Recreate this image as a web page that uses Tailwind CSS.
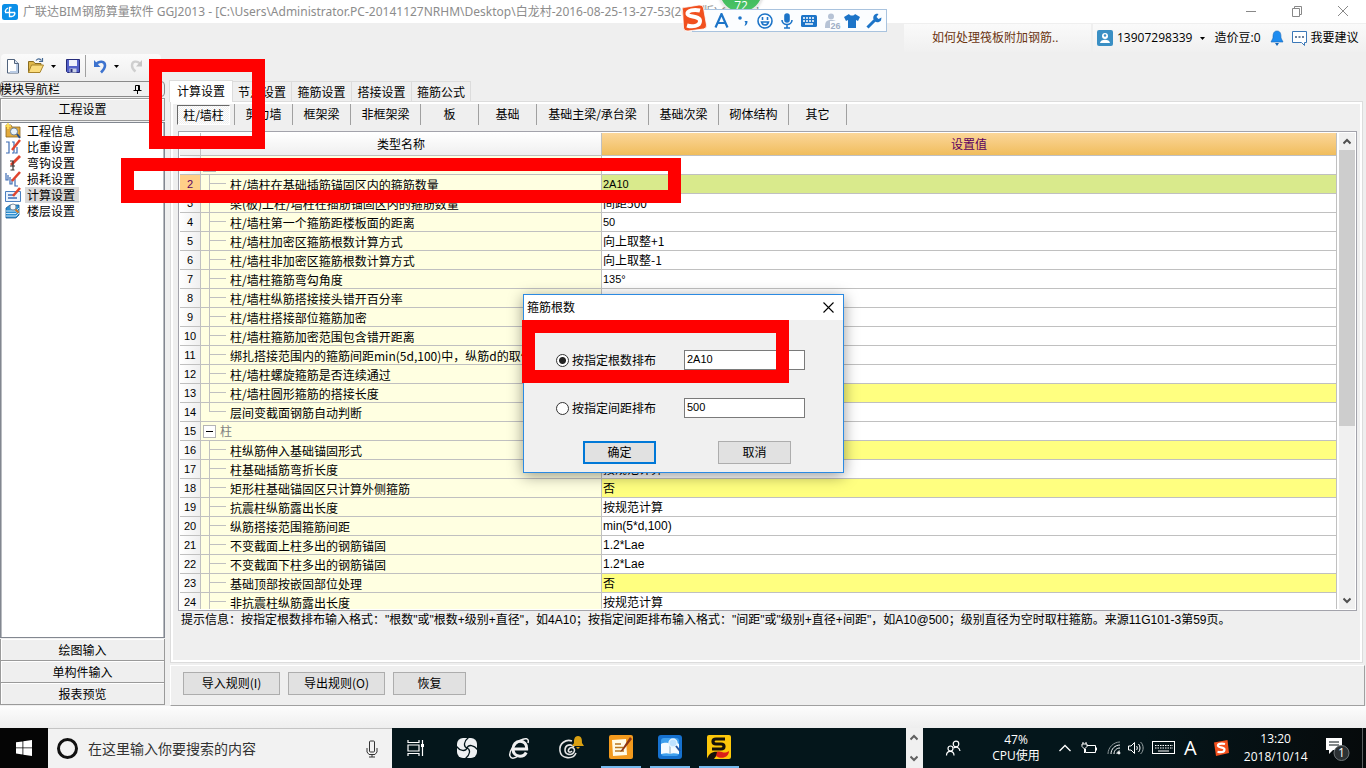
<!DOCTYPE html>
<html lang="zh-CN">
<head>
<meta charset="utf-8">
<title>广联达BIM钢筋算量软件 GGJ2013</title>
<script src="https://cdn.jsdelivr.net/npm/@tailwindcss/browser@4"></script>
</head>
<body class="relative flex h-screen flex-col overflow-hidden bg-[#efefef] font-['Noto_Sans_CJK_SC','Liberation_Sans',sans-serif] text-xs text-black">

<!-- Title bar -->
<header class="flex h-[23px] shrink-0 items-center bg-white pl-0.5">
  <svg class="size-4 shrink-0" viewBox="0 0 16 16"><rect width="16" height="16" rx="2.5" fill="#0b8fe8"/><path d="M3 8.500h10M9.500 3.500H7.500v9H10M13 8.500a4.200 4.200 0 0 1-3 4M3.200 8A4.600 4.600 0 0 1 6 4" fill="none" stroke="#fff" stroke-width="1.300"/></svg>
  <h1 class="ml-[5px] grow overflow-hidden font-['Noto_Sans','Noto_Sans_CJK_SC',sans-serif] whitespace-nowrap text-[#8c8c8c]">广联达BIM钢筋算量软件 GGJ2013 - [C:\Users\Administrator.PC-20141127NRHM\Desktop\白龙村-2016-08-25-13-27-53(2016版).GGJ12]</h1>
  <div class="flex shrink-0 items-center pb-0.5">
    <button aria-label="最小化" class="flex w-[46px] justify-center"><svg class="size-3" viewBox="0 0 12 12"><path d="M1 6.500h10" stroke="#888"/></svg></button>
    <button aria-label="还原" class="flex w-[46px] justify-center"><svg class="size-3" viewBox="0 0 12 12" fill="none" stroke="#888"><path d="M1.500 3.500h7v8h-7zM3.500 3.500v-2h7v8h-2"/></svg></button>
    <button aria-label="关闭" class="flex w-[46px] justify-center"><svg class="size-3" viewBox="0 0 12 12" stroke="#888"><path d="M1 1l10 10M11 1L1 11"/></svg></button>
  </div>
</header>

<!-- Tool strip -->
<div class="flex h-[57px] shrink-0 items-start justify-between">
  <div class="mt-[31px] ml-px flex h-6 w-40 items-center rounded-sm bg-gradient-to-b from-[#fbfbfb] to-[#f0f0f0]">
    <button aria-label="新建" class="ml-1"><svg class="size-4" viewBox="0 0 16 16"><path d="M2.500 1.500h7l4 4v9.500h-11z" fill="#fff" stroke="#51637c"/><path d="M12 6v8H5" fill="none" stroke="#b9cbe4" stroke-width="2"/><path d="M9.500 1.500v4h4" fill="#d6e2f2" stroke="#51637c"/></svg></button>
    <button aria-label="打开" class="ml-1.5"><svg class="size-[18px]" viewBox="0 0 18 18"><path d="M1.500 15.500v-11h5l1.500 2h6v3" fill="#e0b84a" stroke="#8a6d20"/><path d="M1.500 15.500l3-7.500h12l-3.500 7.500z" fill="#fbdc7c" stroke="#a8842b"/><path d="M9 3.500c2-2.500 4-2 5.500 0M15.500 1v3.500H12" fill="none" stroke="#476a94" stroke-width="1.200"/></svg></button>
    <svg class="ml-[5px] size-[7px]" viewBox="0 0 7 7"><path d="M1 2h5L3.500 5z"/></svg>
    <button aria-label="保存" class="ml-2"><svg class="size-4" viewBox="0 0 16 16"><path d="M1.500 1.500h13v13h-12l-1-1z" fill="#5361c9" stroke="#252b7a"/><path d="M4 2h8v6H4z" fill="#eef1fb"/><path d="M4.500 10.500h7v4h-7z" fill="#c9d0e4"/><path d="M5.500 11h2v3h-2z" fill="#252b7a"/></svg></button>
    <span class="ml-1 h-[22px] w-px bg-[#a0a0a0]"></span>
    <button aria-label="撤销" class="ml-[7px]"><svg class="size-4" viewBox="0 0 16 16"><path d="M3 6.500C6 2.500 12 2.800 12 7.500c0 3-2 5-4 7" fill="none" stroke="#3d73cf" stroke-width="2.600"/><path d="M1 2v7h6.500z" fill="#3d73cf"/></svg></button>
    <svg class="ml-1 size-[7px]" viewBox="0 0 7 7"><path d="M1 2h5L3.500 5z"/></svg>
    <button aria-label="重做" class="ml-2"><svg class="size-4" viewBox="0 0 16 16"><path d="M12 5.500C9 2.500 4 3 4 7.500c0 2.500 1.500 4.500 3.500 6" fill="none" stroke="#cfcfcf" stroke-width="2.400"/><path d="M14 2v6.500H8z" fill="#c6c6c6"/></svg></button>
  </div>
  <div class="mt-px flex h-7 items-center font-['Open_Sans','Noto_Sans_CJK_SC',sans-serif]">
    <a href="#" class="flex h-7 w-[187px] items-center bg-gradient-to-b from-[#fafafa] to-[#f0f0f0] pl-7 text-[#6b3410]">如何处理筏板附加钢筋..</a>
    <div class="ml-0.5 flex h-7 w-[273px] items-center bg-gradient-to-b from-[#fafafa] to-[#f0f0f0] pl-1 whitespace-nowrap">
      <svg class="size-4 shrink-0" viewBox="0 0 16 16"><rect width="16" height="16" rx="2" fill="#3a8fc4"/><circle cx="8" cy="6" r="3" fill="#fff"/><path d="M3 13c0-4.500 10-4.500 10 0z" fill="#fff"/><circle cx="8" cy="5.500" r="1.200" fill="#3a8fc4"/></svg>
      <span class="ml-1">13907298339</span>
      <svg class="ml-[7px] size-[7px] shrink-0" viewBox="0 0 7 7"><path d="M1 2h5L3.500 5z"/></svg>
      <span class="ml-2">造价豆:0</span>
      <svg class="ml-2 size-4 shrink-0" viewBox="0 0 16 16"><path d="M8 1c4 0 4 4 4 7l2 4H2l2-4c0-3 0-7 4-7z" fill="#1e8cf0" stroke="#1466b8" stroke-width=".6"/><path d="M6 13h4l-2 3z" fill="#1466b8"/></svg>
      <svg class="ml-1.5 size-[17px] shrink-0" viewBox="0 0 17 17"><path d="M1.500 1.500h14v11h-2v3l-3-3h-9z" fill="#fff" stroke="#3b78b8"/><path d="M4 7h2M7.500 7h2M11 7h2" stroke="#3b5a80" stroke-width="1.300"/></svg>
      <a href="#" class="ml-[3px]">我要建议</a>
    </div>
  </div>
</div>

<!-- Work area -->
<div class="flex min-h-0 grow">
  <!-- Navigator -->
  <aside class="mt-px mb-px flex w-[165px] shrink-0 flex-col">
    <div class="flex h-4 items-center justify-between rounded-sm border border-[#8a8a8a] pr-[22px]">
      <h2 class="-ml-px leading-3 font-normal">模块导航栏</h2>
      <svg class="size-[9px]" viewBox="0 0 9 9" fill="none" stroke="#000"><path d="M2.500 5V.5h4V5M5.500 1v4M.5 5.500h8M4.500 6v3"/></svg>
    </div>
    <button class="mt-px h-[23px] border border-[#9a9a9a] pb-0.5 shadow-[inset_1px_1px_#fff]">工程设置</button>
    <nav class="mt-px grow border border-[#828790] bg-white pl-1 shadow-[inset_1px_0_#b8bbc0,inset_-1px_0_#b8bbc0]">
      <ul>
        <li class="flex h-4 items-center gap-1"><svg class="size-4" viewBox="0 0 16 16"><path d="M1 2h5l1 2h8v10H1z" fill="#e3ab3c" stroke="#8a6420" stroke-width=".8"/><path d="M3 0v6M0 3h6" stroke="#ffe25c" stroke-width="1.600"/><circle cx="9" cy="8.500" r="3.600" fill="#e8f2fb" stroke="#6b7f96"/><path d="M12 11l3 4" stroke="#2c4f88" stroke-width="2"/></svg><a href="#" class="px-0.5 leading-4">工程信息</a></li>
        <li class="flex h-4 items-center gap-1"><svg class="size-4" viewBox="0 0 16 16" fill="none"><path d="M1 3h3v11H1M7 3h2v11H7M12 8v6h-2" stroke="#3c6cb4" stroke-width="1.200"/><path d="M15 1L7 11" stroke="#e0442e" stroke-width="2.400"/></svg><a href="#" class="px-0.5 leading-4">比重设置</a></li>
        <li class="flex h-4 items-center gap-1"><svg class="size-4" viewBox="0 0 16 16" fill="none"><path d="M15 1L6 10" stroke="#e0442e" stroke-width="2.800"/><path d="M5 6h3v9M5.500 15h4M5 11h5" stroke="#333" stroke-width="1.200"/></svg><a href="#" class="px-0.5 leading-4">弯钩设置</a></li>
        <li class="flex h-4 items-center gap-1"><svg class="size-4" viewBox="0 0 16 16" fill="none"><path d="M1 2v7h2V4M5 6v7h2V8M10 8v7h3" stroke="#3c6cb4" stroke-width="1.200"/><path d="M15 1L7 10" stroke="#e0442e" stroke-width="2.600"/></svg><a href="#" class="px-0.5 leading-4">损耗设置</a></li>
        <li class="flex h-4 items-center gap-1"><svg class="size-4" viewBox="0 0 16 16"><path d="M.5 4.500h15v10H.5z" fill="#e9f2fc" stroke="#4a7fc0"/><path d="M3 8h5M3 11h9" stroke="#3c6cb4" stroke-width="1.300"/><path d="M15 1L8 9" stroke="#e0442e" stroke-width="2.600"/></svg><a href="#" aria-current="page" class="h-4 bg-[#d9d9d9] px-0.5 pr-1 leading-4">计算设置</a></li>
        <li class="flex h-4 items-center gap-1"><svg class="size-4" viewBox="0 0 16 16"><path d="M1 5l4-3h9v10l-3 3H1z" fill="#2e8fd0" stroke="#185c94" stroke-width=".8"/><path d="M1 8h10l3-3M1 10.500h10l3-3M1 13h10l3-3" fill="none" stroke="#c9e6f8"/><circle cx="8" cy="4" r="3" fill="#f3f8fc" stroke="#8192a4"/><path d="M10.500 6.500l3 3" stroke="#d27a28" stroke-width="2"/></svg><a href="#" class="px-0.5 leading-4">楼层设置</a></li>
      </ul>
    </nav>
    <div class="mt-px flex flex-col">
      <button class="h-[22px] border-r border-b border-l border-[#9a9a9a] shadow-[inset_1px_1px_#fff]">绘图输入</button>
      <button class="h-[22px] border-r border-b border-l border-[#9a9a9a] shadow-[inset_1px_1px_#fff]">单构件输入</button>
      <button class="h-[22px] border-r border-b border-l border-[#9a9a9a] shadow-[inset_1px_1px_#fff]">报表预览</button>
    </div>
  </aside>
  <div class="w-px bg-[#f7f7f7]"></div>
  <!-- Settings page -->
  <main class="mr-px ml-[5px] flex min-w-0 grow flex-col">
    <div role="tablist" class="relative z-10 -mb-px -ml-px flex h-[22px] items-end">
      <button role="tab" aria-selected="true" class="h-[22px] w-16 border border-b-0 border-[#dcdcdc] bg-white pb-0.5">计算设置</button>
      <button role="tab" class="mb-px h-5 w-[59px] border border-b-0 border-l-0 border-[#dcdcdc]">节点设置</button>
      <button role="tab" class="mb-px h-5 w-[60px] border border-b-0 border-l-0 border-[#dcdcdc]">箍筋设置</button>
      <button role="tab" class="mb-px h-5 w-[60px] border border-b-0 border-l-0 border-[#dcdcdc]">搭接设置</button>
      <button role="tab" class="mb-px h-5 w-[59px] border border-b-0 border-l-0 border-[#dcdcdc]">箍筋公式</button>
    </div>
    <section class="mr-0.5 flex min-h-0 grow flex-col border border-[#dcdcdc]">
      <div class="flex min-h-0 grow flex-col border-2 border-white">
        <div role="tablist" class="flex h-[21px] shrink-0 items-center pl-1">
          <button role="tab" aria-selected="true" class="h-5 w-[53px] border border-t-[#696969] border-r-white border-b-white border-l-[#696969] bg-[repeating-conic-gradient(#ffffff_0_25%,#efefef_0_50%)] bg-[length:2px_2px]">柱/墙柱</button>
          <span class="ml-1 h-[21px] w-px bg-[#a0a0a0]"></span>
          <button role="tab" class="h-[21px] w-[58px] border-r border-[#a0a0a0] pb-0.5">剪力墙</button>
          <button role="tab" class="h-[21px] w-[58px] border-r border-[#a0a0a0] pb-0.5">框架梁</button>
          <button role="tab" class="h-[21px] w-[70px] border-r border-[#a0a0a0] pb-0.5">非框架梁</button>
          <button role="tab" class="h-[21px] w-[58px] border-r border-[#a0a0a0] pb-0.5">板</button>
          <button role="tab" class="h-[21px] w-[58px] border-r border-[#a0a0a0] pb-0.5">基础</button>
          <button role="tab" class="h-[21px] w-28 border-r border-[#a0a0a0] pb-0.5">基础主梁/承台梁</button>
          <button role="tab" class="h-[21px] w-[70px] border-r border-[#a0a0a0] pb-0.5">基础次梁</button>
          <button role="tab" class="h-[21px] w-[70px] border-r border-[#a0a0a0] pb-0.5">砌体结构</button>
          <button role="tab" class="h-[21px] w-[58px] border-r border-[#a0a0a0] pb-0.5">其它</button>
        </div>
        <div class="mt-1.5 mr-[3px] ml-[5px] flex min-h-0 grow border border-[#a3a3ab] bg-white p-px">
          <div class="min-w-0 grow overflow-hidden">
            <table class="w-full table-fixed border-separate border-spacing-0">
              <colgroup><col class="w-[21px]"><col class="w-[401px]"><col></colgroup>
              <thead>
                <tr class="h-[23px]">
                  <th class="border-r border-b border-[#c0c0c0] bg-gradient-to-b from-white to-[#efefef] p-0"></th>
                  <th class="border-r border-b border-[#c0c0c0] bg-gradient-to-b from-white to-[#efefef] p-0 font-normal">类型名称</th>
                  <th class="border-r border-b border-[#c0c0c0] bg-gradient-to-b from-[#fbd698] to-[#f0bd5b] p-0 font-normal text-[#5b0060]">设置值</th>
                </tr>
              </thead>
              <tbody id="rows"></tbody>
            </table>
          </div>
          <div class="ml-0.5 flex w-4 shrink-0 flex-col bg-[#f0f0f0]">
            <button aria-label="向上滚动" class="flex h-[17px] items-center justify-center"><svg class="h-[7px] w-2" viewBox="0 0 8 7"><path d="M.5 5.500L4 2l3.500 3.500" fill="none" stroke="#505050" stroke-width="2"/></svg></button>
            <div class="h-[276px] bg-[#cdcdcd]"></div>
            <button aria-label="向下滚动" class="mt-auto flex h-[17px] items-center justify-center"><svg class="h-[7px] w-2" viewBox="0 0 8 7"><path d="M.5 1.500L4 5l3.500-3.500" fill="none" stroke="#505050" stroke-width="2"/></svg></button>
          </div>
        </div>
        <p class="h-[49px] shrink-0 overflow-hidden pt-px pl-2 font-['Liberation_Sans','Noto_Sans_CJK_SC',sans-serif] whitespace-nowrap">提示信息：按指定根数排布输入格式："根数"或"根数+级别+直径"，如4A10；按指定间距排布输入格式："间距"或"级别+直径+间距"，如A10@500；级别直径为空时取柱箍筋。来源11G101-3第59页。</p>
      </div>
    </section>
    <div class="mt-0.5 flex h-[41px] shrink-0 gap-2 border border-t-white border-r-[#a0a0a0] border-b-[#a0a0a0] border-l-white pt-1.5 pl-3">
      <button class="h-[23px] w-[97px] border border-[#adadad] bg-[#e1e1e1] pb-0.5">导入规则(I)</button>
      <button class="h-[23px] w-[97px] border border-[#adadad] bg-[#e1e1e1] pb-0.5">导出规则(O)</button>
      <button class="h-[23px] w-[73px] border border-[#adadad] bg-[#e1e1e1] pb-0.5">恢复</button>
    </div>
  </main>
</div>
<div class="h-[22px] shrink-0 bg-gradient-to-b from-[#fdfdfd] to-[#eeeeee]"></div>

<!-- Taskbar -->
<footer class="flex h-10 shrink-0 items-stretch bg-[#04161b] font-['Open_Sans','Noto_Sans_CJK_SC',sans-serif] text-white">
  <button aria-label="开始" class="flex w-12 shrink-0 items-center justify-center bg-[#050505]"><svg class="size-4" viewBox="0 0 16 16" fill="#fff"><path d="M0 2.300l6.500-.9v6.100H0zM7.300 1.300L16 0v7.500H7.300zM0 8.300h6.500v6.200L0 13.600zM7.300 8.300H16V16l-8.700-1.200z"/></svg></button>
  <label class="flex w-[344px] shrink-0 items-center border-t border-[#c4c4c4] bg-[#f2f2f2] pl-2">
    <svg class="size-[23px] shrink-0" viewBox="0 0 23 23"><circle cx="11.500" cy="11.500" r="9" fill="none" stroke="#111" stroke-width="3"/></svg>
    <input type="text" aria-label="搜索" placeholder="在这里输入你要搜索的内容" class="ml-[9px] min-w-0 grow bg-transparent text-sm placeholder:text-[#333]">
    <svg class="mr-[14px] h-[18px] w-3" viewBox="0 0 12 18" fill="none" stroke="#333"><rect x="3.500" y="1" width="5" height="11" rx="1"/><path d="M1 8v4l2 2.500h6l2-2.500V8M6 14.500V17M3 17h6"/></svg>
  </label>
  <div class="flex grow items-center">
    <button aria-label="任务视图" class="flex w-12 justify-center"><svg class="size-[18px]" viewBox="0 0 18 18" fill="none" stroke="#fff" stroke-width="1.200"><path d="M1 1v2.500h11V1M1 6h11v6H1zM1 17v-2.500h11V17M15.500 1v16"/><path d="M14 5h3v3h-3z" fill="#fff" stroke="none"/></svg></button>
    <button aria-label="浏览器" class="flex w-[54px] justify-center"><svg class="size-[22px]" viewBox="0 0 22 22"><rect x="1" y="1" width="20" height="20" rx="6" fill="#eef0f2"/><path d="M11 11C7 9.500 8 4 12.500 .500M11 11C12.500 7 18 8 21.500 12.500M11 11C15 12.500 14 18 9.500 21.500M11 11C9.500 15 4 14 .500 9.500" fill="none" stroke="#04161b" stroke-width="1.300"/></svg></button>
    <button aria-label="IE" class="flex w-[50px] justify-center"><svg class="size-[22px]" viewBox="0 0 22 22" fill="none" stroke="#f1f1f1"><path d="M4.500 12h14.200C19 7 16 4.300 12 4.300S5 7.500 5 12s3 7.200 7 7.200c3 0 5-1.200 6.200-3.700" stroke-width="3"/><path d="M20 6c1.500-5-3-5.500-8-2.500C6 7 .5 15 2 19s6 1.500 8 0" stroke-width="1.500"/></svg></button>
    <button aria-label="提醒" class="flex w-[54px] justify-center"><svg class="size-7" viewBox="0 0 28 28" fill="none"><path d="M17 13c-3-4-9-2-9 3s7 6 9 2-3-6-5-3 1 4 3 2M19 19c-3 7-15 6-16-2S9 5 15 7" stroke="#e6e6e6" stroke-width="1.600"/><path d="M21 2c4 0 4 4 4 7l2 3H15l2-3c0-3 0-7 4-7zM19 13h4l-2 2z" fill="#d9a012"/></svg></button>
    <button aria-label="笔记" class="ml-[3px] flex h-10 w-10 items-center justify-center border-b-2 border-[#76b9ed]"><svg class="size-6" viewBox="0 0 24 24"><rect width="24" height="24" rx="2" fill="#f39a1d"/><path d="M3 5l14-1 1 16-14 1z" fill="#fffbe8"/><path d="M6 9h6M6 12.500h8M6 16h9" stroke="#b97820" stroke-width="1.400"/><path d="M21 2l-8 12-2 3 3-1.500L23 4z" fill="#8c3413"/></svg></button>
    <button aria-label="词典" class="ml-[9px] flex h-10 w-10 items-center justify-center border-b-2 border-[#76b9ed]"><svg class="size-6" viewBox="0 0 24 24"><rect width="24" height="24" rx="3" fill="#1671cf"/><rect x="3" y="3" width="18" height="18" rx="3" fill="#3fa0ee"/><path d="M3 9c4-2 7-1 9 0 2-1 5-2 9 0v10c-4-1-7-1-9 0-2-1-5-1-9 0z" fill="#f5fbff"/><path d="M12 9v10" stroke="#86a8c4"/><circle cx="15" cy="8" r="4" fill="#bfe2ff" stroke="#e6f5ff" stroke-width="1.400"/><path d="M18 11l4 5" stroke="#2856a0" stroke-width="2"/></svg></button>
    <button aria-label="搜狗" class="ml-[9px] flex h-10 w-10 items-center justify-center border-b-2 border-[#76b9ed]"><svg class="size-6" viewBox="0 0 24 24"><rect width="24" height="24" rx="2" fill="#fdc70a"/><path d="M18 4H9C5 4 5 9 9 9h5c4 0 4 5 0 5H5" fill="none" stroke="#16120a" stroke-width="3.200"/><path d="M0 24c2-6 6-8 12-7l-5 7z" fill="#16120a"/><path d="M10 17c5-2 6 3 12-1 0 6-7 9-13 5z" fill="#dc1f18"/></svg></button>
  </div>
  <div class="flex w-[17px] shrink-0 flex-col justify-between bg-[#f0f0f0] px-1 py-1.5">
    <svg class="h-[7px] w-2" viewBox="0 0 8 7"><path d="M.5 5.500L4 2l3.500 3.500" fill="none" stroke="#606060" stroke-width="2"/></svg>
    <svg class="h-[7px] w-2" viewBox="0 0 8 7"><path d="M.5 1.500L4 5l3.500-3.500" fill="none" stroke="#606060" stroke-width="2"/></svg>
  </div>
  <div class="flex w-[443px] shrink-0 items-center bg-gradient-to-r from-[#04161b] from-50% to-[#060a0b] pl-[22px]">
    <svg class="size-4 shrink-0" viewBox="0 0 16 16" fill="none" stroke="#fff" stroke-width="1.200"><circle cx="11" cy="4" r="2.800"/><path d="M8.500 8c3-2 6-.5 6.500 3"/><circle cx="5.500" cy="8.500" r="2.500"/><path d="M1.500 15.500c0-5.500 7.500-5.500 7.500 0"/></svg>
    <div class="ml-5 w-[70px] text-center leading-4"><div>47%</div><div>CPU使用</div></div>
    <svg class="ml-2 size-3 shrink-0" viewBox="0 0 12 12" fill="none" stroke="#fff" stroke-width="1.300"><path d="M.5 9L6 3.500 11.500 9"/></svg>
    <svg class="ml-2.5 h-3 w-4 shrink-0" viewBox="0 0 16 12" fill="none" stroke="#fff"><path d="M6 3.500h8.500v7H4.500V7M1 2h5v2.500L3.500 7 1 4.500zM2 0v2M5 0v2M3.500 7v4"/><path d="M15.500 5.500v3"/></svg>
    <svg class="ml-2.5 size-3.5 shrink-0" viewBox="0 0 14 14" fill="none" stroke="#fff"><path d="M1 13C1 6.500 6.500 1 13 1" stroke="#8c9698"/><path d="M4 13c0-5 4-9 9-9M7 13c0-3.500 2.500-6 6-6M10 13c0-2 1-3 3-3"/><circle cx="12" cy="12" r="1" fill="#fff"/></svg>
    <svg class="ml-[7px] h-3.5 w-4 shrink-0" viewBox="0 0 16 14" fill="none" stroke="#fff"><path d="M.5 5h2.500l3.500-3.500v11L3 9H.5zM8.500 5c1 1 1 3 0 4M10.500 3c2 2 2 6 0 8"/><path d="M12.500 1c3.500 3 3.500 9 0 12" stroke="#9aa3a5"/></svg>
    <svg class="ml-2 h-[14px] w-6 shrink-0" viewBox="0 0 24 14" fill="none" stroke="#fff"><rect x=".5" y=".5" width="22" height="12"/><path d="M3 4.500h18M3 7h18" stroke-dasharray="1.500 1"/><path d="M6 10h11"/></svg>
    <span class="ml-2 text-xl">A</span>
    <svg class="ml-4 size-4 shrink-0" viewBox="0 0 16 16"><path d="M1 2.500L14.500 0 16 13l-13 3z" fill="#f4511e"/><path d="M12 4C8 3 4.500 4 5 6s6.500.5 6.500 3.500-4 3-7 2.200" fill="none" stroke="#fff" stroke-width="2.200"/></svg>
    <div class="ml-3 w-[70px] text-center leading-[18px]"><div>13:20</div><div>2018/10/14</div></div>
    <button aria-label="1 条新通知" class="ml-3.5 shrink-0"><svg class="h-7 w-[26px]" viewBox="0 0 26 28"><path d="M1 4h16v12H8l-4 4v-4H1z" fill="#fff"/><path d="M4 8h10M4 11h10" stroke="#071114"/><circle cx="16.500" cy="19" r="7.500" fill="#2c3133" stroke="#71777a"/><text x="16.500" y="23" text-anchor="middle" font-size="12" font-family="Open Sans" fill="#fff">1</text></svg></button>
    <span class="ml-[11px] h-full w-px bg-[#5b5f60]"></span>
  </div>
</footer>

<!-- Floating download ball and input-method bar -->
<div class="absolute -top-8 left-[718px] flex size-[46px] items-end justify-center rounded-full border-2 border-[#e8e8e8] bg-gradient-to-b from-[#2fa84f] to-[#4cc566] font-['Open_Sans',sans-serif] text-xs leading-3 text-white shadow">72</div>
<div class="absolute top-[9px] left-[692px] flex h-[23px] w-[195px] items-center border border-[#a9c3de] bg-[#fbfdff] pl-[21px]">
  <svg class="h-4 w-[15px]" viewBox="0 0 15 16"><path d="M1.500 14.500L7.500 1l6 13.500M3.500 10h8" fill="none" stroke="#1c74c8" stroke-width="2.200"/></svg>
  <svg class="ml-2 size-3" viewBox="0 0 12 12"><circle cx="3" cy="3" r="1.800" fill="#1c74c8"/><path d="M7.500 6h3c0 3-1 4-3 5l1-3z" fill="#1c74c8"/></svg>
  <svg class="ml-2 size-4" viewBox="0 0 16 16" fill="none" stroke="#1c74c8" stroke-width="1.600"><circle cx="8" cy="8" r="7"/><path d="M4.500 9c1 4 6 4 7 0zM5.500 4v3M10.500 4v3"/></svg>
  <svg class="ml-2 h-4 w-3" viewBox="0 0 12 16" fill="none" stroke="#1c74c8" stroke-width="1.600"><rect x="4" y="1" width="4" height="8" rx="2" fill="#1c74c8"/><path d="M1 7c0 6 10 6 10 0M6 12v3M3 15h6"/></svg>
  <svg class="ml-2 h-3 w-4" viewBox="0 0 16 12"><rect width="16" height="12" rx="1.500" fill="#1c74c8"/><path d="M2 3h12M2 6h12" stroke="#fff" stroke-width="1.500" stroke-dasharray="2 1"/><path d="M4 9h8" stroke="#fff" stroke-width="1.500"/></svg>
  <svg class="ml-2 size-4" viewBox="0 0 16 16"><circle cx="6" cy="3.500" r="3" fill="#b6c3d6"/><path d="M0 15c0-6 1-8 6-8s5 1 5 3v5z" fill="#b6c3d6"/><rect x="5" y="8" width="11" height="8" fill="#fbfdff"/><text x="10.500" y="15.500" text-anchor="middle" font-size="9" font-weight="bold" font-family="Liberation Sans" fill="#9fafc6">26</text></svg>
  <svg class="ml-[3px] size-4" viewBox="0 0 16 16"><path d="M5 1c1 2 5 2 6 0l5 3-2 4-2-1v8H4V7L2 8 0 4z" fill="#1c74c8"/></svg>
  <svg class="ml-1.5 size-4" viewBox="0 0 16 16"><path d="M1.500 14.500l7-7" stroke="#1c74c8" stroke-width="3"/><path d="M12.500 1C9 0 6.500 3 7.500 6.500S13 10 15 7.500l.5-3-3 1.500-2-2z" fill="#1c74c8"/></svg>
</div>
<svg class="absolute top-1 left-[680px] h-7 w-[28px]" viewBox="0 0 28 28"><path d="M2.500 5.500Q1 4 4 3.500L19 1q4-.5 4.500 3l3 17q.5 3.500-3 4L8 27q-4 .5-4.500-3z" fill="#f1501f" stroke="#fff" stroke-width=".8"/><path d="M20 6.500C14 5 7 6.500 7.500 10s12.500 1.500 12.500 7-8 6-13 4.500" fill="none" stroke="#fff" stroke-width="4"/></svg>

<!-- Stirrup count dialog -->
<div role="dialog" aria-labelledby="dlg-title" class="absolute top-[294px] left-[523px] w-[321px] border border-[#2b8ae2] bg-[#f0f0f0] shadow-[0_3px_14px_rgba(0,0,0,0.4)]">
  <div class="flex h-[25px] items-center justify-between bg-white pr-[9px] pl-[3px]">
    <h2 id="dlg-title" class="pb-0.5 font-normal">箍筋根数</h2>
    <button aria-label="关闭对话框"><svg class="size-[11px]" viewBox="0 0 11 11"><path d="M.5.5l10 10M10.500.5l-10 10" stroke="#000" stroke-width="1.100"/></svg></button>
  </div>
  <form class="pt-[30px] pb-2">
    <div class="flex h-5 items-center pl-8">
      <input type="radio" name="mode" id="by-count" checked class="size-[13px] appearance-none rounded-full border border-[#333] bg-white bg-[radial-gradient(circle,#222_0_3px,transparent_4px)]">
      <label for="by-count" class="ml-[3px] w-28">按指定根数排布</label>
      <input type="text" aria-label="根数" value="2A10" class="h-5 w-[121px] border border-[#7a7a7a] bg-white pb-0.5 pl-0.5 font-['Liberation_Sans',sans-serif] text-[11px]">
    </div>
    <div class="mt-7 flex h-5 items-center pl-8">
      <input type="radio" name="mode" id="by-gap" class="size-[13px] appearance-none rounded-full border border-[#333] bg-white">
      <label for="by-gap" class="ml-[3px] w-28">按指定间距排布</label>
      <input type="text" aria-label="间距" value="500" class="h-5 w-[121px] border border-[#7a7a7a] bg-white pb-0.5 pl-0.5 font-['Liberation_Sans',sans-serif] text-[11px]">
    </div>
    <div class="mt-[23px] flex gap-[62px] pl-[59px]">
      <button type="button" class="h-[23px] w-[73px] border-2 border-[#0078d7] bg-[#e1e1e1] pb-0.5">确定</button>
      <button type="button" class="h-[23px] w-[73px] border border-[#adadad] bg-[#e1e1e1] pb-0.5">取消</button>
    </div>
  </form>
</div>

<!-- Red callouts -->
<div class="pointer-events-none absolute top-[59px] left-[149px] z-20 h-[90px] w-[116px] border-[13px] border-[#ff0000]"></div>
<div class="pointer-events-none absolute top-[158px] left-[121px] z-20 h-[45px] w-[560px] border-[13px] border-[#ff0000]"></div>
<div class="pointer-events-none absolute top-[320px] left-[522px] z-20 h-[63px] w-[267px] border-[13px] border-[#ff0000]"></div>

<script>
// name, value, kind: g = group, s = selected, y = highlighted, e = last of its group
const data = [
  ['公共设置项', '', 'g'],
  ['柱/墙柱在基础插筋锚固区内的箍筋数量', '2A10', 's'],
  ['梁(板)上柱/墙柱在插筋锚固区内的箍筋数量', '间距500', ''],
  ['柱/墙柱第一个箍筋距楼板面的距离', '50', ''],
  ['柱/墙柱加密区箍筋根数计算方式', '向上取整+1', ''],
  ['柱/墙柱非加密区箍筋根数计算方式', '向上取整-1', ''],
  ['柱/墙柱箍筋弯勾角度', '135°', ''],
  ['柱/墙柱纵筋搭接接头错开百分率', '', ''],
  ['柱/墙柱搭接部位箍筋加密', '', ''],
  ['柱/墙柱箍筋加密范围包含错开距离', '', ''],
  ['绑扎搭接范围内的箍筋间距min(5d,100)中，纵筋d的取值', '', ''],
  ['柱/墙柱螺旋箍筋是否连续通过', '', ''],
  ['柱/墙柱圆形箍筋的搭接长度', '', 'y'],
  ['层间变截面钢筋自动判断', '', 'e'],
  ['柱', '', 'g'],
  ['柱纵筋伸入基础锚固形式', '', 'y'],
  ['柱基础插筋弯折长度', '按规范计算', ''],
  ['矩形柱基础锚固区只计算外侧箍筋', '否', 'y'],
  ['抗震柱纵筋露出长度', '按规范计算', ''],
  ['纵筋搭接范围箍筋间距', 'min(5*d,100)', ''],
  ['不变截面上柱多出的钢筋锚固', '1.2*Lae', ''],
  ['不变截面下柱多出的钢筋锚固', '1.2*Lae', ''],
  ['基础顶部按嵌固部位处理', '否', 'y'],
  ['非抗震柱纵筋露出长度', '按规范计算', '']
];
document.getElementById('rows').innerHTML = data.map(([name, value, kind], i) => {
  const num = kind === 's' ? 'bg-[#ffcf88] text-[#5b0060]' : 'bg-gradient-to-r from-white to-[#efefef]';
  const fill = kind === 's' ? 'bg-[#d9ea8c]' : kind === 'y' ? 'bg-[#ffff80]' : 'bg-white';
  const latin = /^[\x20-\x7e°]+$/.test(value) ? (/[a-z]/.test(value) ? "font-['Liberation_Sans',sans-serif]" : "font-['Liberation_Sans',sans-serif] text-[11px]") : '';
  const tree = kind === 'g'
    ? '<span class="ml-0.5 flex size-[13px] items-center justify-center border border-[#b5b5b5] bg-white"><span class="h-px w-[7px] bg-black"></span></span><span class="ml-1 text-[#808080]">' + name + '</span>'
    : '<span class="ml-2 flex h-[18px] w-[17px] flex-col"><span class="h-[9px] border-b border-l border-[#c0c0c0]"></span>' +
      (kind === 'e' ? '' : '<span class="-mb-px h-[10px] border-l border-[#c0c0c0]"></span>') + '</span><span class="ml-1 pt-px">' + name + '</span>';
  return `<tr class="h-[19px]">
    <td class="border-r border-b border-[#c0c0c0] p-0 text-center font-['Liberation_Sans',sans-serif] text-[11px] leading-[18px] ${num}">${i + 1}</td>
    <td class="border-r border-b border-[#c0c0c0] bg-[#ffffe1] p-0"><div class="flex h-[18px] items-center whitespace-nowrap leading-[18px]">${tree}</div></td>
    <td class="border-r border-b border-[#c0c0c0] py-0 pr-0 pl-px leading-[18px] ${fill} ${latin}">${value}</td></tr>`;
}).join('');
</script>
</body>
</html>
